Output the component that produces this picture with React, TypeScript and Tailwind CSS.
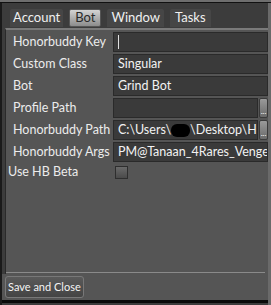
import React from "react";

const font = { fontFamily: 'Lato, "Noto Sans", sans-serif' };

function Row({ label, children, indent = true }: { label: string; children?: React.ReactNode; indent?: boolean }) {
  return (
    <div className="flex h-[22px] items-stretch">
      <div className={`flex w-[107px] shrink-0 items-center whitespace-nowrap text-[12.5px] text-[#ececec] ${indent ? "pl-[7px]" : "pl-[3px]"}`}>{label}</div>
      <div className="flex min-w-0 flex-1 items-stretch py-[1px]">{children}</div>
    </div>
  );
}

function Input({ children, button = false }: { children?: React.ReactNode; button?: boolean }) {
  return (
    <div className="flex min-w-0 flex-1 items-stretch">
      <div className="flex min-w-0 flex-1 items-center overflow-hidden whitespace-nowrap border border-[#2a2a2a] bg-[#3a3a3a] pl-[4px] text-[12.5px] text-[#f2f2f2]">
        {children}
      </div>
      {button && (
        <div className="ml-[1px] flex w-[9px] shrink-0 items-end justify-center rounded-[2px] border border-[#3a3a3a] bg-gradient-to-b from-[#9a9a9a] to-[#6a6a6a] pb-[2px] text-[8px] leading-none text-white">
          ...
        </div>
      )}
    </div>
  );
}

export default function App() {
  return (
    <div className="relative h-[305px] w-[271px] overflow-hidden bg-[#3c3c3c]" style={font}>
      <div className="h-[2px] bg-[#6e6e6e]" />
      <div className="h-[1px] bg-[#111]" />
      <div className="flex h-[302px]">
        <div className="w-[2px] bg-[#1a1a1a]" />
        <div className="flex min-w-0 flex-1 flex-col">
          {/* tabs */}
          <div className="flex h-[25px] items-end gap-[6px] pl-[8px] pb-[1px]">
            <div className="flex h-[18px] items-center rounded-t-[2px] bg-[#464646] px-[3px] text-[13px] text-[#f0f0f0]">Account</div>
            <div className="flex h-[18px] items-center rounded-[2px] border border-[#555] bg-gradient-to-b from-[#d4d4d4] to-[#8c8c8c] px-[5px] text-[13px] text-[#2a2a2a]">Bot</div>
            <div className="flex h-[18px] items-center rounded-t-[2px] bg-[#464646] px-[4px] text-[13px] text-[#f0f0f0]">Window</div>
            <div className="flex h-[18px] items-center rounded-t-[2px] bg-[#464646] px-[5px] text-[13px] text-[#f0f0f0]">Tasks</div>
          </div>
          {/* panel */}
          <div className="ml-[3px] flex h-[246px] flex-col border-t-[2px] border-l border-[#7a7a7a] border-l-[#2a2a2a] bg-[#555555] pt-[1px]">
            <Row label="Honorbuddy Key">
              <Input>
                <span className="h-[14px] w-[1px] bg-[#e0e0e0]" />
              </Input>
            </Row>
            <Row label="Custom Class">
              <Input>Singular</Input>
            </Row>
            <Row label="Bot">
              <Input>Grind Bot</Input>
            </Row>
            <Row label="Profile Path">
              <Input button />
            </Row>
            <Row label="Honorbuddy Path">
              <Input button>
                C:\Users\
                <span className="inline-block h-[13px] w-[19px] shrink-0 rounded-[6px] bg-black" />
                \Desktop\H
              </Input>
            </Row>
            <Row label="Honorbuddy Args">
              <Input>PM@Tanaan_4Rares_Vengeance</Input>
            </Row>
            <div className="flex h-[18px] items-center">
              <div className="w-[107px] whitespace-nowrap pl-[2px] text-[12.5px] text-[#ececec]">Use HB Beta</div>
              <div className="ml-[2px] h-[13px] w-[13px] border border-[#2e2e2e] bg-gradient-to-b from-[#6a6a6a] to-[#4a4a4a]" />
            </div>
            <div className="flex-1" />
            <div className="mr-[3px] mb-[1px] h-[1px] bg-[#8a8a8a]" />
          </div>
          <div className="flex h-[26px] items-center bg-[#555555] pl-[3px]">
            <div className="flex h-[22px] items-center whitespace-nowrap rounded-[3px] border border-[#787878] bg-gradient-to-b from-[#5a5a5a] to-[#444] px-[2px] text-[11px] text-[#f4f4f4]">
              Save and Close
            </div>
          </div>
          <div className="h-[3px] bg-[#0a0a0a]" />
        </div>
        <div className="w-[3px] bg-[#6a6a6a]" />
      </div>
    </div>
  );
}
